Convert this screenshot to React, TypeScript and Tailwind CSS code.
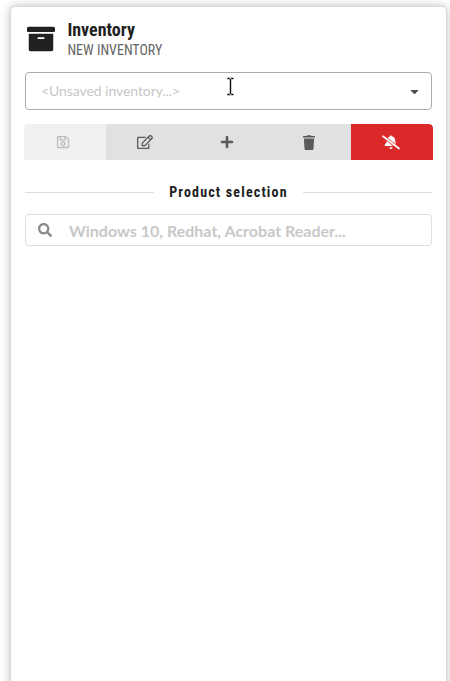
import type { ReactNode } from "react";
import { FaArchive, FaCaretDown, FaPlus, FaRegEdit, FaRegSave, FaSearch } from "react-icons/fa";

const condensed = "font-['Roboto_Condensed',Roboto,sans-serif] [font-stretch:75%]";

function ToolButton({ label, className, children }: { label: string; className: string; children: ReactNode }) {
  return (
    <button aria-label={label} className={`flex h-9 items-center justify-center text-[14px] ${className}`}>
      {children}
    </button>
  );
}

function TrashIcon() {
  return (
    <svg width="12" height="15" viewBox="0 0 12 15" fill="currentColor">
      <path d="M.4 1H3.6L4.3.2h3.4L8.4 1h3.2q.4 0 .4.4v1.1H0V1.4Q0 1 .4 1ZM.9 3.5h10.2l-.6 10.2q-.1 1.3-1.3 1.3H2.8q-1.2 0-1.3-1.3Z" />
    </svg>
  );
}

function BellSlashIcon() {
  return (
    <svg width="18" height="15" viewBox="0 0 18 15" fill="currentColor">
      <path d="M6 2.5q1-1 2.3-1.2V.9q0-.7.7-.7t.7.7v.4q3.5.8 3.5 4.5 0 2.4 1.3 3.8L6 3.2ZM4.8 6.1 10.8 11H3.3q-.8 0-.8-.7 0-.3.4-.7 1.7-1.4 1.9-3.5ZM7.2 12.3h3.6q-.3 1.8-1.8 1.8t-1.8-1.8Z" />
      <path d="m1 1.3 16 12.2" fill="none" stroke="currentColor" strokeWidth="1.7" strokeLinecap="round" />
    </svg>
  );
}

function TextCursor() {
  return (
    <svg className="absolute left-[199.5px] top-[4px]" width="9" height="19" viewBox="0 0 9 19" fill="none">
      <path d="M1 1.5h2.5l1 1 1-1h2M4.5 2v15M1 17.5h2.5l1-1 1 1h2" stroke="#b5b5b5" strokeWidth="2.4" />
      <path d="M1.5 1.5h2l1 1 1-1h2M4.5 2v15M1.5 17.5h2l1-1 1 1h2" stroke="#111" strokeWidth="1" />
    </svg>
  );
}

export default function App() {
  return (
    <div className="h-[681px] w-[450px] overflow-hidden bg-white pl-[10px] pr-[3px] pt-[6px] font-[Lato,sans-serif]">
      <main className="h-[700px] rounded-[5px] border border-[#d9d9da] bg-white px-[13px] shadow-[0_0_10px_rgba(0,0,0,0.25)]">
        <header className="flex h-[65px] pl-[3px] pt-[12px]">
          <FaArchive className="mt-[6px] size-[28px] text-[#212122]" />
          <div className={`ml-[12.4px] ${condensed}`}>
            <h1 className="text-[18px] font-bold leading-[22px] text-[#212122]">Inventory</h1>
            <p className="text-[14px] leading-[18px] text-[#666]">NEW INVENTORY</p>
          </div>
        </header>

        <div className="relative mx-px flex h-[38px] items-center justify-between rounded-[4px] border border-[#acacad] pl-[15px] pr-[10px]">
          <span className="text-[14px] leading-5 tracking-[-0.07px] text-[#c7c7c7]">&lt;Unsaved inventory...&gt;</span>
          <FaCaretDown className="size-[13px] text-[#4c4c4c]" />
          <TextCursor />
        </div>

        <div className="mt-[14px] grid grid-cols-5 overflow-hidden rounded-t-[4px] text-[#5a5a5a]">
          <ToolButton label="Save" className="bg-[#f0f0f0] pr-[4px] text-[#bdbdbd]"><FaRegSave /></ToolButton>
          <ToolButton label="Edit" className="bg-[#e0e1e2] pr-[4px]"><FaRegEdit className="size-[16px]" /></ToolButton>
          <ToolButton label="Add" className="bg-[#e0e1e2] pr-[2px]"><FaPlus /></ToolButton>
          <ToolButton label="Delete" className="bg-[#e0e1e2] pr-[2px]"><TrashIcon /></ToolButton>
          <ToolButton label="Mute alerts" className="rounded-tr-[4px] bg-[#db2828] pr-[2px] text-white"><BellSlashIcon /></ToolButton>
        </div>

        <div className="mx-px mt-[22px] flex h-5 items-center gap-[15px]">
          <span className="mt-px h-px flex-1 bg-[#dededf]" />
          <h2 className={`text-[14px] font-bold leading-5 tracking-[1.18px] text-[#212122] ${condensed}`}>Product selection</h2>
          <span className="mt-px h-px flex-1 bg-[#dededf]" />
        </div>

        <div className="mx-px mt-[12px] flex h-8 items-center rounded-[4px] border border-[#dededf] pl-[12px]">
          <FaSearch className="size-[14px] text-[#888]" />
          <span className="ml-[17px] pt-[2px] text-[16px] font-bold leading-5 tracking-[0.01px] text-[#c8c8c8]">Windows 10, Redhat, Acrobat Reader...</span>
        </div>
      </main>
    </div>
  );
}
